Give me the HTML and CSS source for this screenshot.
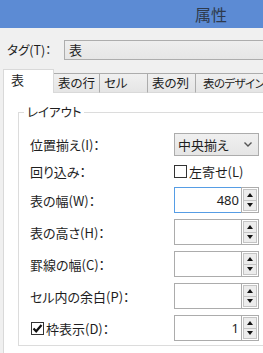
FILE: index.html
```html
<!DOCTYPE html>
<html lang="ja">
<head>
<meta charset="utf-8">
<link rel="stylesheet" href="styles.css">
</head>
<body>
<div class="titlebar"><span class="title">属性</span></div>
<div class="tagrow">
  <span class="taglabel">タグ(T)：</span>
  <div class="tagbox">表</div>
</div>
<div class="tabs">
  <div class="tab active">表</div>
  <div class="tab w1">表の行</div>
  <div class="tab w2">セル</div>
  <div class="tab w3">表の列</div>
  <div class="tab w4">表のデザイン</div>
</div>
<div class="panel">
  <fieldset class="group">
    <legend>レイアウト</legend>
    <div class="row r-select">
      <span class="label">位置揃え(I)：</span>
      <div class="select"><span>中央揃え</span>
        <svg class="chev" width="8" height="5" viewBox="0 0 8 5"><polyline points="0.5,0.5 4,4 7.5,0.5" fill="none" stroke="#555" stroke-width="1.4"/></svg>
      </div>
    </div>
    <div class="row r-check">
      <span class="label">回り込み：</span>
      <label class="check"><span class="box"></span><span>左寄せ(L)</span></label>
    </div>
    <div class="row r-num">
      <span class="label">表の幅(W)：</span>
      <div class="num"><div class="field focus">480</div><div class="spin"><div class="btn up"><i></i></div><div class="btn down"><i></i></div></div></div>
    </div>
    <div class="row r-num">
      <span class="label">表の高さ(H)：</span>
      <div class="num"><div class="field"></div><div class="spin"><div class="btn up"><i></i></div><div class="btn down"><i></i></div></div></div>
    </div>
    <div class="row r-num">
      <span class="label">罫線の幅(C)：</span>
      <div class="num"><div class="field"></div><div class="spin"><div class="btn up"><i></i></div><div class="btn down"><i></i></div></div></div>
    </div>
    <div class="row r-num">
      <span class="label">セル内の余白(P)：</span>
      <div class="num"><div class="field"></div><div class="spin"><div class="btn up"><i></i></div><div class="btn down"><i></i></div></div></div>
    </div>
    <div class="row r-num">
      <label class="label check first"><span class="box checked"><svg width="11" height="11" viewBox="0 0 11 11"><polyline points="1.5,5.5 4.2,8.3 9.5,2" fill="none" stroke="#111" stroke-width="2.2"/></svg></span><span>枠表示(D)：</span></label>
      <div class="num"><div class="field">1</div><div class="spin"><div class="btn up"><i></i></div><div class="btn down"><i></i></div></div></div>
    </div>
  </fieldset>
</div>
</body>
</html>
```

FILE: styles.css
```css
html, body {
  margin: 0;
  padding: 0;
}
body {
  width: 263px;
  height: 353px;
  overflow: hidden;
  background: #f0f0f0;
  font-family: "Noto Sans CJK JP", "Noto Sans", sans-serif;
  font-feature-settings: "palt";
  font-size: 12px;
  color: #1e1e1e;
}
.titlebar {
  height: 28px;
  background: #5c8bd4;
  box-sizing: border-box;
  padding-left: 195px;
}
.title {
  font-size: 16px;
  line-height: 29px;
  color: #2e3a4c;
}
.tagrow {
  display: flex;
  padding-top: 12px;
  height: 41px;
  box-sizing: border-box;
}
.taglabel {
  width: 57px;
  padding-left: 7px;
  line-height: 20px;
  flex: none;
  font-size: 12.5px;
}
.tagbox {
  flex: 1;
  height: 20px;
  box-sizing: border-box;
  border: 1px solid #adadad;
  border-right: none;
  background: linear-gradient(#eeeeee, #e6e6e6);
  padding-left: 4px;
  line-height: 18px;
  font-size: 13px;
}
.tabs {
  display: flex;
  align-items: flex-end;
  height: 24px;
  padding-left: 3px;
  position: relative;
  z-index: 1;
}
.tab {
  flex: none;
  height: 20px;
  box-sizing: border-box;
  border: 1px solid #acacac;
  border-bottom-color: #d9d9d9;
  background: linear-gradient(#f0f0f0, #e5e5e5);
  margin-left: -1px;
  padding-left: 4px;
  line-height: 18px;
  white-space: nowrap;
  font-size: 12.5px;
}
.tab.active {
  margin-left: 0;
  width: 51px;
  height: 24px;
  background: #fff;
  border-color: #d9d9d9;
  border-bottom: none;
  padding-left: 7px;
  line-height: 20px;
  position: relative;
  z-index: 2;
  font-size: 13px;
}
.w1 { width: 47px; }
.w2 { width: 49px; }
.w3 { width: 49px; }
.w4 {
  width: 68px;
  padding-left: 7px;
  border-right: none;
  font-size: 11.5px;
  letter-spacing: -0.6px;
}
.panel {
  margin-left: 3px;
  margin-top: -1px;
  background: #fff;
  border: 1px solid #d9d9d9;
  border-right: none;
  height: 260px;
}
.group {
  margin: 11px 0 0 14px;
  padding: 0 0 4px 11px;
  border: 1px solid #dcdcdc;
  border-right: none;
  min-width: 0;
}
.group legend {
  margin-left: -6px;
  padding: 0 2px 0 3px;
  line-height: 16px;
  font-size: 12.5px;
}
.row {
  display: flex;
  align-items: center;
  font-size: 13px;
}
.label {
  width: 144px;
  flex: none;
  white-space: nowrap;
}
.r-select {
  margin-top: 13px;
  height: 23px;
}
.r-check {
  margin-top: 5px;
  height: 21px;
}
.r-num {
  margin-top: 6px;
  height: 26px;
}
.r-check + .r-num {
  margin-top: 5px;
}
.select {
  width: 85px;
  height: 23px;
  box-sizing: border-box;
  border: 1px solid #acacac;
  background: linear-gradient(#f0f0f0, #e5e5e5);
  display: flex;
  align-items: center;
  justify-content: space-between;
  padding: 0 6px 0 3px;
}
.check {
  display: flex;
  align-items: center;
  gap: 2px;
}
.check.first {
  margin-left: 1px;
  width: 143px;
}
.box {
  width: 13px;
  height: 13px;
  box-sizing: border-box;
  border: 1px solid #333;
  background: #fff;
  display: flex;
  align-items: center;
  justify-content: center;
}
.num {
  display: flex;
  width: 85px;
  height: 26px;
}
.field {
  width: 68px;
  height: 26px;
  box-sizing: border-box;
  border: 1px solid #acacac;
  text-align: right;
  padding-right: 2px;
  font-size: 13px;
  line-height: 24px;
  font-family: "Noto Sans", sans-serif;
}
.field.focus {
  border-color: #569de5;
}
.spin {
  width: 18px;
  height: 26px;
  box-sizing: border-box;
  border: 1px solid #acacac;
  margin-left: -1px;
  display: flex;
  flex-direction: column;
  padding: 1px;
  background: #fff;
}
.btn {
  flex: 1;
  border: 1px solid #c4c4c4;
  background: #ececec;
  display: flex;
  align-items: center;
  justify-content: center;
}
.btn.down {
  border-top: none;
}
.btn i {
  width: 0;
  height: 0;
  border-left: 3.5px solid transparent;
  border-right: 3.5px solid transparent;
}
.up i {
  border-bottom: 4px solid #111;
}
.down i {
  border-top: 4px solid #111;
}
```
